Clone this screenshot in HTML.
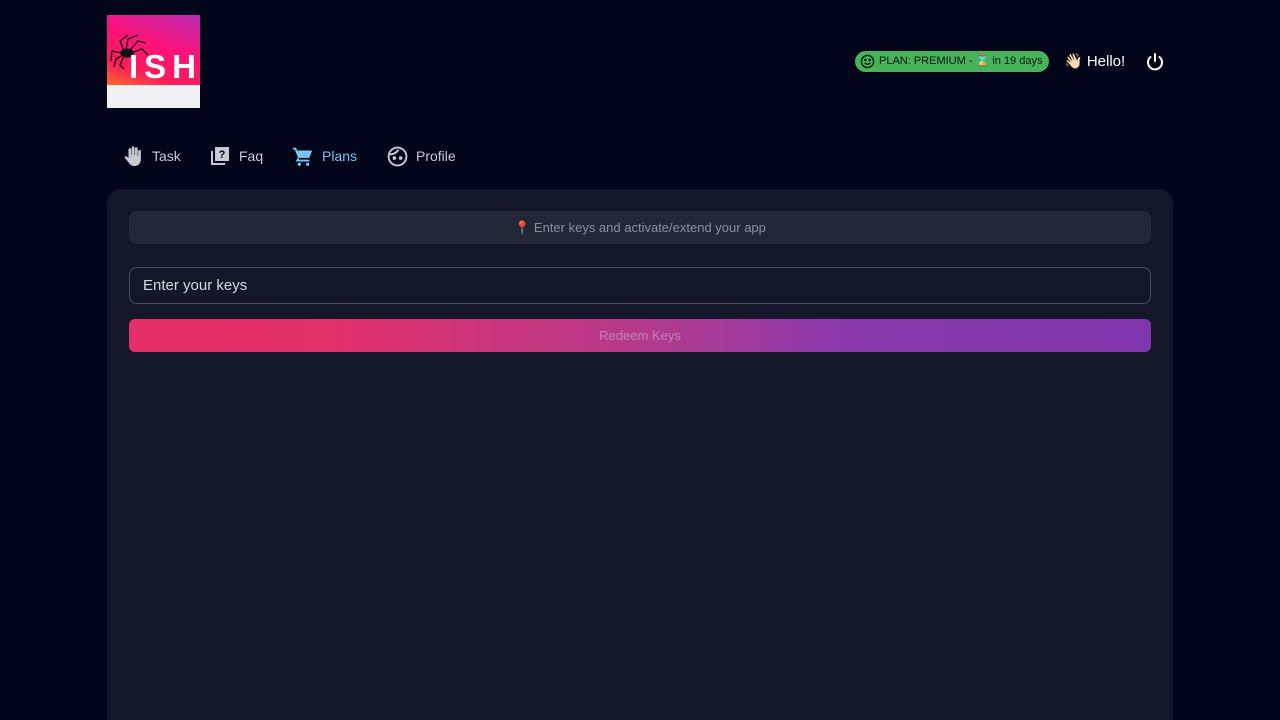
<!DOCTYPE html>
<html style="overflow:hidden;height:720px"><head><meta charset="utf-8"><style>
body{margin:0;background:#03051a;font-family:"Liberation Sans","Noto Sans CJK JP",sans-serif;width:1280px;height:720px;overflow:hidden;position:relative}
.logo{position:absolute;left:107px;top:15px;width:93px;height:93px;overflow:hidden}
.logo .top{height:70px;background:linear-gradient(200deg,#b62bb0 0%,#ff1277 45%,#ff1a5c 75%,#ff6a2a 100%);position:relative}
.logo .top span{position:absolute;left:22px;top:36px;color:#fff;font-weight:bold;font-size:33px;letter-spacing:6px;line-height:32px;white-space:nowrap}
.logo .bot{height:23px;background:#f1f1f3}
.plan{position:absolute;left:855px;top:51px;width:194px;height:21px;border-radius:11px;background:#46b25a;color:#0b1a10;font-size:11px;line-height:21px;white-space:nowrap;overflow:hidden}
.plan span{position:absolute;left:24px}
.hello{position:absolute;left:1064px;top:52px;color:#fff;font-size:15px}
.nav{position:absolute;top:148px;font-size:14px;color:#c8cad2}
.panel{position:absolute;left:107px;top:189px;width:1066px;height:531px;background:#131729;border-radius:14px 14px 0 0}
.info{position:absolute;left:22px;top:22px;width:1022px;height:33px;background:#232839;border-radius:8px;color:#8b8f9e;font-size:13px;text-align:center;line-height:33px}
.inp{position:absolute;left:22px;top:78px;width:1020px;height:35px;border:1px solid #4a4f60;border-radius:8px;color:#d8dae2;font-size:15px;line-height:36px}
.inp span{margin-left:13px}
.btn{position:absolute;left:22px;top:130px;width:1022px;height:33px;border-radius:6px;background:linear-gradient(90deg,#e42f68 0%,#e2316b 20%,#b53a8c 50%,#8a3aad 70%,#8036ad 100%);color:#c084b3;font-size:13px;text-align:center;line-height:33px}
</style></head><body>
<div class="logo"><div class="top"><svg width="40" height="40" style="position:absolute;left:3px;top:16px" viewBox="0 0 40 40" fill="none" stroke="#111" stroke-width="1.3"><ellipse cx="17" cy="22" rx="6" ry="4" fill="#111"/><path d="M14 20 L10 10 L18 4 M16 19 L18 8 L28 4 M20 19 L28 10 L36 12 M21 22 L32 18 L38 24 M13 24 L6 28 L4 36 M14 25 L10 34 L14 38 M12 22 L2 20 L1 30"/></svg><span>ISH</span></div><div class="bot"></div></div>
<div class="plan"><svg width="15" height="15" style="position:absolute;left:5px;top:3px" viewBox="0 0 16 16" fill="none" stroke="#0b1a10" stroke-width="1.5"><circle cx="8" cy="8" r="6.5"/><circle cx="5.8" cy="6.3" r=".6" fill="#0b1a10"/><circle cx="10.2" cy="6.3" r=".6" fill="#0b1a10"/><path d="M5 9.5 Q8 12.5 11 9.5"/></svg><span>PLAN: PREMIUM - ⌛ in 19 days</span></div>
<div class="hello">👋🏻 Hello!</div>
<svg width="20" height="20" style="position:absolute;left:1145px;top:52px" viewBox="0 0 20 20" fill="none" stroke="#fff" stroke-width="2" stroke-linecap="round"><path d="M10 2 V9"/><path d="M5.5 5 A7 7 0 1 0 14.5 5"/></svg>
<svg width="22" height="22" style="position:absolute;left:123px;top:145px" viewBox="0 0 24 24" fill="#c8cad2"><path d="M6 12V5a1.5 1.5 0 013 0v6h.5V3a1.5 1.5 0 013 0v8h.5V4a1.5 1.5 0 013 0v8h.5V7a1.5 1.5 0 013 0v9c0 4-3 7-7 7-3 0-5-1.5-6.5-4L2 14c-.6-1 .6-2.2 1.6-1.5L6 14z"/></svg>
<div class="nav" style="left:152px">Task</div>
<svg width="20" height="20" style="position:absolute;left:210px;top:146px" viewBox="0 0 20 20"><path d="M2 5v13h13" stroke="#c8cad2" stroke-width="2" fill="none"/><rect x="5" y="1" width="14" height="14" fill="#c8cad2"/><text x="12" y="12" font-size="11" font-weight="bold" text-anchor="middle" fill="#03051a" font-family="Liberation Sans">?</text></svg>
<div class="nav" style="left:239px">Faq</div>
<svg width="22" height="22" style="position:absolute;left:292px;top:145px" viewBox="0 0 24 24" fill="#7cc3f0"><path d="M1 3h3.5l1 3H22l-3 8H8l-1 2h12v2H4l2.5-4.5L3 5H1z"/><circle cx="8" cy="21" r="1.8"/><circle cx="17" cy="21" r="1.8"/></svg>
<div class="nav" style="left:322px;color:#7cc3f0">Plans</div>
<svg width="21" height="21" style="position:absolute;left:387px;top:146px" viewBox="0 0 20 20" fill="none" stroke="#c8cad2" stroke-width="1.8"><circle cx="10" cy="10" r="8.5"/><path d="M2.5 8 Q8 8 11 3.5"/><circle cx="7" cy="11.5" r=".8" fill="#c8cad2"/><circle cx="13" cy="11.5" r=".8" fill="#c8cad2"/></svg>
<div class="nav" style="left:416px">Profile</div>
<div class="panel">
<div class="info">📍 Enter keys and activate/extend your app</div>
<div class="inp"><span>Enter your keys</span></div>
<div class="btn">Redeem Keys</div>
</div>
</body></html>
